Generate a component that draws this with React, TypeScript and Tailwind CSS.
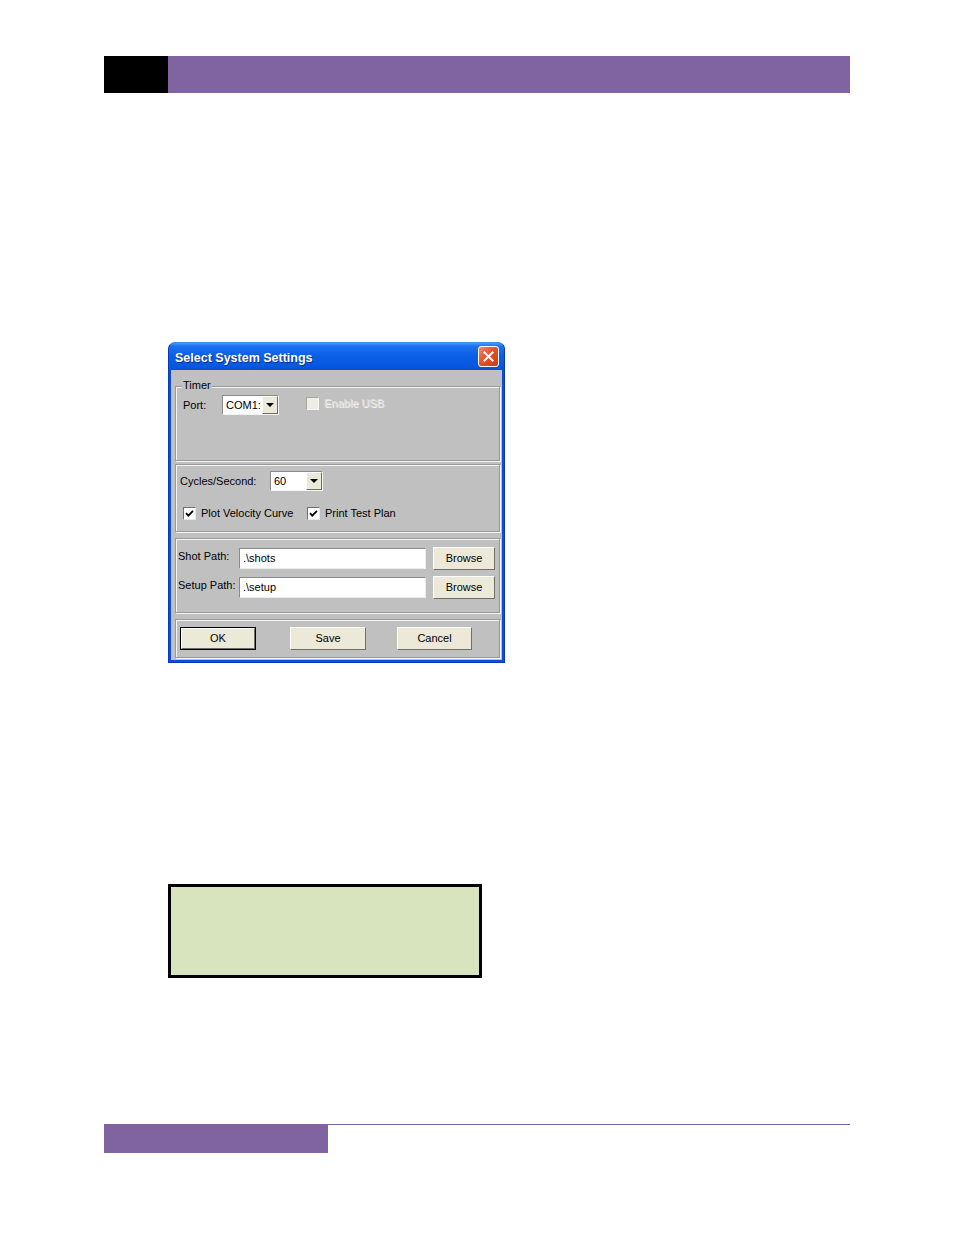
import React from "react";

const etched =
  "border border-[#9a9a9a] shadow-[inset_1px_1px_0_#f4f4f4,1px_1px_0_#f4f4f4]";

function Combo({ value, width }: { value: string; width: string }) {
  return (
    <div
      className={`${width} h-[20px] flex bg-white border border-t-[#8a8a8a] border-l-[#8a8a8a] border-r-[#f4f4f4] border-b-[#f4f4f4]`}
    >
      <div className="flex-1 flex items-center pl-[3px] text-[11px] leading-none text-black">
        {value}
      </div>
      <div className="w-[16px] h-full bg-[#ece9d8] border border-t-[#ffffff] border-l-[#ffffff] border-r-[#6f6d62] border-b-[#6f6d62] flex items-center justify-center">
        <div className="w-0 h-0 border-l-[4px] border-r-[4px] border-t-[4px] border-l-transparent border-r-transparent border-t-black" />
      </div>
    </div>
  );
}

function CheckBox({ checked, disabled }: { checked?: boolean; disabled?: boolean }) {
  return (
    <div
      className={`w-[13px] h-[13px] border ${
        disabled
          ? "bg-[#efeee4] border-t-[#a8a8a0] border-l-[#a8a8a0] border-r-[#f6f6f2] border-b-[#f6f6f2]"
          : "bg-white border-t-[#707070] border-l-[#707070] border-r-[#e8e8e8] border-b-[#e8e8e8]"
      } flex items-center justify-center`}
    >
      {checked && (
        <svg width="11" height="11" viewBox="0 0 11 11">
          <path d="M2 5.2 L4.3 7.6 L9 2.8" stroke="#000" strokeWidth="1.8" fill="none" />
        </svg>
      )}
    </div>
  );
}

function Button({ label, width, isDefault }: { label: string; width: string; isDefault?: boolean }) {
  return (
    <div className={`${width} h-[23px] ${isDefault ? "border border-black" : ""} flex`}>
      <div className="flex-1 bg-[#ece9d8] border border-t-white border-l-white border-r-[#716f64] border-b-[#716f64] flex items-center justify-center text-[11px] text-black leading-none">
        {label}
      </div>
    </div>
  );
}

function TextField({ value }: { value: string }) {
  return (
    <div className="w-[187px] h-[21px] bg-white border border-t-[#8a8a8a] border-l-[#8a8a8a] border-r-[#ececec] border-b-[#ececec] flex items-center pl-[3px] text-[11px] leading-none text-black">
      {value}
    </div>
  );
}

function Dialog() {
  return (
    <div className="mt-[249px] ml-[168px] w-[337px] h-[321px] flex flex-col rounded-t-[7px] bg-[#0b4fd8] border border-[#0838b8] border-t-[#3c8ef3]">
      <div className="h-[27px] flex items-center pl-[6px] pr-[5px] rounded-t-[6px] bg-[linear-gradient(180deg,#4a97f8_0%,#1a70f0_12%,#0a5ee6_50%,#0758e0_85%,#0a50d2_100%)]">
        <div className="flex-1 pt-[4px] text-white font-bold text-[12.5px] leading-none [text-shadow:1px_1px_0_#0a2f8c]">
          Select System Settings
        </div>
        <div className="w-[21px] h-[21px] rounded-[3px] border border-white bg-[linear-gradient(135deg,#f08a68_0%,#e2552c_45%,#c63c14_100%)] flex items-center justify-center">
          <svg width="11" height="11" viewBox="0 0 11 11">
            <path d="M1.5 1.5 L9.5 9.5 M9.5 1.5 L1.5 9.5" stroke="#fff" strokeWidth="2" strokeLinecap="square" />
          </svg>
        </div>
      </div>
      <div className="flex-1 mx-[2px] mb-[2px] bg-[#c0c0c0] flex flex-col pl-[4px] pr-[2px] text-[11px] text-black font-['Liberation_Sans',Arial,sans-serif]">
        {/* Timer */}
        <div className={`relative mt-[16px] h-[75px] ${etched}`}>
          <div className="absolute -top-[7px] left-[6px] bg-[#c0c0c0] px-[1px] leading-none text-[11px]">
            Timer
          </div>
          <div className="flex items-center pt-[8px] pl-[7px]">
            <div className="w-[39px] leading-none">Port:</div>
            <Combo value="COM1:" width="w-[57px]" />
            <div className="ml-[27px] -mt-[3px] flex items-center">
              <CheckBox disabled />
              <div className="ml-[5px] leading-none text-[#dcdcd4] [text-shadow:1px_1px_0_#f2f2f2]">
                Enable USB
              </div>
            </div>
          </div>
        </div>
        {/* Cycles */}
        <div className={`mt-[3px] h-[68px] ${etched} flex flex-col`}>
          <div className="flex items-center pt-[6px] pl-[4px]">
            <div className="w-[90px] leading-none">Cycles/Second:</div>
            <Combo value="60" width="w-[53px]" />
          </div>
          <div className="flex items-center mt-[16px] pl-[7px]">
            <div className="w-[124px] flex items-center">
              <CheckBox checked />
              <div className="ml-[5px] leading-none">Plot Velocity Curve</div>
            </div>
            <CheckBox checked />
            <div className="ml-[5px] leading-none">Print Test Plan</div>
          </div>
        </div>
        {/* Paths */}
        <div className={`mt-[6px] h-[75px] ${etched} flex flex-col pl-[2px]`}>
          <div className="flex items-center mt-[8px]">
            <div className="w-[61px] leading-none -mt-[5px]">Shot Path:</div>
            <TextField value=".\shots" />
            <div className="ml-[7px]">
              <Button label="Browse" width="w-[62px]" />
            </div>
          </div>
          <div className="flex items-center mt-[6px]">
            <div className="w-[61px] leading-none -mt-[5px]">Setup Path:</div>
            <TextField value=".\setup" />
            <div className="ml-[7px]">
              <Button label="Browse" width="w-[62px]" />
            </div>
          </div>
        </div>
        {/* Buttons */}
        <div className={`mt-[6px] h-[39px] ${etched} flex items-center pl-[4px]`}>
          <Button label="OK" width="w-[76px]" isDefault />
          <div className="ml-[34px]">
            <Button label="Save" width="w-[76px]" />
          </div>
          <div className="ml-[31px]">
            <Button label="Cancel" width="w-[75px]" />
          </div>
        </div>
      </div>
    </div>
  );
}

export default function App() {
  return (
    <div className="w-[954px] h-[1235px] bg-white flex flex-col overflow-hidden font-['Liberation_Sans',Arial,sans-serif]">
      <div className="mt-[56px] ml-[104px] w-[746px] h-[37px] flex">
        <div className="w-[64px] bg-black" />
        <div className="flex-1 bg-[#8064a2]" />
      </div>
      <Dialog />
      <div className="mt-[221px] ml-[168px] w-[314px] h-[94px] border-[3px] border-black bg-[#d7e4bd]" />
      <div className="mt-[146px] ml-[104px] w-[746px] border-t border-[#8064a2]">
        <div className="w-[224px] h-[28px] bg-[#8064a2]" />
      </div>
    </div>
  );
}
